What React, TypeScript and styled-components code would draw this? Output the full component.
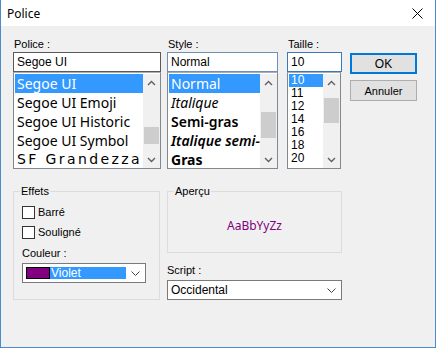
import React from 'react';
import styled, { createGlobalStyle } from 'styled-components';

const GlobalStyle = createGlobalStyle`
  html, body {
    margin: 0;
    padding: 0;
    background: #ffffff;
  }
  * {
    box-sizing: border-box;
  }
`;

const uiFont = `"Liberation Sans", Arial, sans-serif`;
const segoe = `"Noto Sans", "Open Sans", sans-serif`;

const Window = styled.div`
  width: 436px;
  height: 348px;
  display: flex;
  flex-direction: column;
  border: 1px solid #4a8ccb;
  border-top: none;
  background: #f0f0f0;
  font-family: ${uiFont};
  font-size: 11px;
  color: #000;
  overflow: hidden;
`;

const TitleBar = styled.div`
  height: 26px;
  flex: none;
  display: flex;
  align-items: center;
  justify-content: space-between;
  background: #ffffff;
  padding: 0 12px 0 6px;
`;

const Title = styled.span`
  font-family: ${segoe};
  font-size: 12px;
`;

const Body = styled.div`
  flex: 1;
  padding: 11px 0 0 12px;
  display: flex;
  flex-direction: column;
`;

const TopRow = styled.div`
  display: flex;
  align-items: flex-start;
`;

const Column = styled.div<{ $w: number; $gap: number }>`
  width: ${(p) => p.$w}px;
  margin-right: ${(p) => p.$gap}px;
  display: flex;
  flex-direction: column;
`;

const Label = styled.div`
  height: 15px;
  line-height: 14px;
  padding-left: 1px;
  white-space: nowrap;
`;

const TextInput = styled.div<{ $border: string }>`
  height: 20px;
  border: 1px solid ${(p) => p.$border};
  background: #fff;
  padding: 0 3px;
  display: flex;
  align-items: center;
  font-size: 12px;
`;

const ListBox = styled.div<{ $w: number }>`
  width: ${(p) => p.$w}px;
  height: 97px;
  border: 1px solid #828790;
  border-top-color: #abadb3;
  background: #fff;
  display: flex;
  padding: 1px 0 0 1px;
`;

const Items = styled.div`
  flex: 1;
  min-width: 0;
  overflow: hidden;
  display: flex;
  flex-direction: column;
`;

const Item = styled.div<{
  $h: number;
  $sel?: boolean;
  $italic?: boolean;
  $weight?: number;
  $size?: number;
  $family?: string;
  $spacing?: number;
}>`
  height: ${(p) => p.$h}px;
  line-height: ${(p) => p.$h}px;
  flex: none;
  white-space: nowrap;
  overflow: hidden;
  padding-left: 2px;
  font-family: ${(p) => p.$family || segoe};
  font-size: ${(p) => p.$size || 14}px;
  font-style: ${(p) => (p.$italic ? 'italic' : 'normal')};
  font-weight: ${(p) => p.$weight || 400};
  letter-spacing: ${(p) => p.$spacing || 0}px;
  background: ${(p) => (p.$sel ? '#3399ff' : 'transparent')};
  color: ${(p) => (p.$sel ? '#fff' : '#000')};
`;

const ScrollBar = styled.div`
  width: 17px;
  flex: none;
  background: #f0f0f0;
  display: flex;
  flex-direction: column;
  align-items: center;
`;

const ArrowBox = styled.div`
  height: 17px;
  width: 17px;
  display: flex;
  align-items: center;
  justify-content: center;
  flex: none;
`;

const Track = styled.div<{ $top: number; $len: number }>`
  flex: 1;
  width: 100%;
  display: flex;
  flex-direction: column;
  align-items: center;
  padding-top: ${(p) => p.$top}px;
  &::before {
    content: '';
    display: block;
    width: 15px;
    height: ${(p) => p.$len}px;
    background: #cdcdcd;
  }
`;

const ButtonCol = styled.div`
  display: flex;
  flex-direction: column;
  gap: 6px;
  padding-top: 16px;
  width: 67px;
`;

const Button = styled.div<{ $default?: boolean }>`
  height: 21px;
  border: ${(p) => (p.$default ? '2px solid #0078d7' : '1px solid #adadad')};
  background: #e1e1e1;
  display: flex;
  align-items: center;
  justify-content: center;
  font-size: ${(p) => (p.$default ? 12 : 11)}px;
`;

const BottomRow = styled.div`
  display: flex;
  align-items: flex-start;
  margin-top: 15px;
`;

const Group = styled.fieldset<{ $w: number; $h: number }>`
  width: ${(p) => p.$w}px;
  height: ${(p) => p.$h}px;
  margin: 0;
  padding: 0 0 0 8px;
  min-width: 0;
  border: 1px solid #dcdcdc;
  display: flex;
  flex-direction: column;
`;

const Legend = styled.legend`
  padding: 0 1px;
  margin-left: -2px;
  line-height: 14px;
  font-size: 11px;
`;

const CheckRow = styled.label`
  display: flex;
  align-items: center;
  gap: 3px;
  height: 16px;
  margin-top: 4px;
  &:first-of-type {
    margin-top: 6px;
  }
`;

const CheckBox = styled.span`
  width: 13px;
  height: 13px;
  border: 1px solid #333;
  background: #fff;
  flex: none;
`;

const GroupLabel = styled.div`
  height: 14px;
  line-height: 14px;
  margin-top: 6px;
`;

const Select = styled.div<{ $w: number }>`
  width: ${(p) => p.$w}px;
  height: 20px;
  border: 1px solid #7a7a7a;
  background: #fff;
  display: flex;
  align-items: center;
  padding: 0 5px 0 3px;
  margin-top: 3px;
  font-size: 12px;
`;

const SelectValue = styled.div`
  flex: 1;
  display: flex;
  align-items: center;
  height: 14px;
`;

const Swatch = styled.span`
  width: 24px;
  height: 12px;
  background: #800080;
  border: 1px solid #000;
  flex: none;
`;

const Highlight = styled.span`
  width: 76px;
  height: 12px;
  line-height: 12px;
  background: #3399ff;
  color: #fff;
  padding-left: 1px;
  margin-right: auto;
`;

const RightCol = styled.div`
  margin-left: 7px;
  display: flex;
  flex-direction: column;
`;

const Sample = styled.div`
  height: 54px;
  flex: none;
  display: flex;
  align-items: center;
  justify-content: center;
  margin-left: -8px;
  font-family: ${segoe};
  font-size: 12px;
  color: #800080;
`;

const ScriptLabel = styled.div`
  height: 14px;
  line-height: 14px;
  margin-top: 10px;
`;

const Chevron = ({ up }: { up?: boolean }) => (
  <svg width="9" height="6" viewBox="0 0 9 6">
    <path
      d={up ? 'M1 5 L4.5 1.5 L8 5' : 'M1 1 L4.5 4.5 L8 1'}
      fill="none"
      stroke="#606060"
      strokeWidth="1.4"
    />
  </svg>
);

const DropChevron = () => (
  <svg width="9" height="5" viewBox="0 0 9 5">
    <path d="M0.5 0.5 L4.5 4.5 L8.5 0.5" fill="none" stroke="#444" strokeWidth="1" />
  </svg>
);

const CloseIcon = () => (
  <svg width="11" height="11" viewBox="0 0 11 11">
    <path d="M0.5 0.5 L10.5 10.5 M10.5 0.5 L0.5 10.5" stroke="#000" strokeWidth="1" />
  </svg>
);

const Scroll = ({ top, len }: { top: number; len: number }) => (
  <ScrollBar>
    <ArrowBox>
      <Chevron up />
    </ArrowBox>
    <Track $top={top} $len={len} />
    <ArrowBox>
      <Chevron />
    </ArrowBox>
  </ScrollBar>
);

const fonts = [
  { name: 'Segoe UI' },
  { name: 'Segoe UI Emoji' },
  { name: 'Segoe UI Historic' },
  { name: 'Segoe UI Symbol' },
  { name: 'SF Grandezza', family: '"DejaVu Sans", sans-serif', spacing: 2.4, size: 14 },
];

const styles = [
  { name: 'Normal' },
  { name: 'Italique', italic: true },
  { name: 'Semi-gras', weight: 600 },
  { name: 'Italique semi-gras', italic: true, weight: 600 },
  { name: 'Gras', weight: 700 },
];

const sizes = ['10', '11', '12', '14', '16', '18', '20'];

const App = () => {
  return (
    <Window>
      <GlobalStyle />
      <TitleBar>
        <Title>Police</Title>
        <CloseIcon />
      </TitleBar>
      <Body>
        <TopRow>
          <Column $w={148} $gap={6}>
            <Label>Police :</Label>
            <TextInput $border="#5a5a5a">Segoe UI</TextInput>
            <ListBox $w={148}>
              <Items>
                {fonts.map((f, i) => (
                  <Item
                    key={f.name}
                    $h={19}
                    $sel={i === 0}
                    $family={f.family}
                    $spacing={f.spacing}
                    $size={f.size}
                  >
                    {f.name}
                  </Item>
                ))}
              </Items>
              <Scroll top={36} len={17} />
            </ListBox>
          </Column>
          <Column $w={111} $gap={9}>
            <Label>Style :</Label>
            <TextInput $border="#6f8fb5">Normal</TextInput>
            <ListBox $w={111}>
              <Items>
                {styles.map((s, i) => (
                  <Item
                    key={s.name}
                    $h={19}
                    $sel={i === 0}
                    $italic={s.italic}
                    $weight={s.weight}
                  >
                    {s.name}
                  </Item>
                ))}
              </Items>
              <Scroll top={21} len={26} />
            </ListBox>
          </Column>
          <Column $w={55} $gap={8}>
            <Label>Taille :</Label>
            <TextInput $border="#3a78b8">10</TextInput>
            <ListBox $w={54}>
              <Items>
                {sizes.map((s, i) => (
                  <Item key={s} $h={13} $sel={i === 0} $family={uiFont} $size={12}>
                    {s}
                  </Item>
                ))}
              </Items>
              <Scroll top={7} len={25} />
            </ListBox>
          </Column>
          <ButtonCol>
            <Button $default>OK</Button>
            <Button>Annuler</Button>
          </ButtonCol>
        </TopRow>
        <BottomRow>
          <Group $w={147} $h={116}>
            <Legend>Effets</Legend>
            <CheckRow>
              <CheckBox />
              Barré
            </CheckRow>
            <CheckRow>
              <CheckBox />
              Souligné
            </CheckRow>
            <GroupLabel>Couleur :</GroupLabel>
            <Select $w={124}>
              <SelectValue>
                <Swatch />
                <Highlight>Violet</Highlight>
              </SelectValue>
              <DropChevron />
            </Select>
          </Group>
          <RightCol>
            <Group $w={175} $h={69}>
              <Legend>Aperçu</Legend>
              <Sample>AaBbYyZz</Sample>
            </Group>
            <ScriptLabel>Script :</ScriptLabel>
            <Select $w={175}>
              <SelectValue>Occidental</SelectValue>
              <DropChevron />
            </Select>
          </RightCol>
        </BottomRow>
      </Body>
    </Window>
  );
};

export default App;
